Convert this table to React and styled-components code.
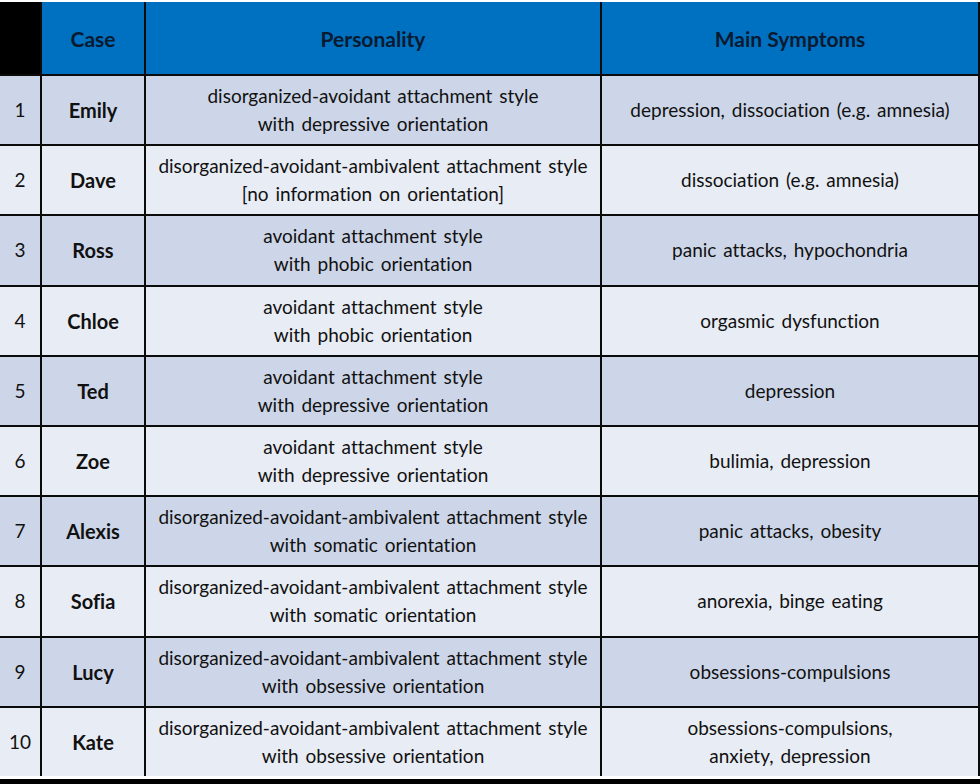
import React from "react";
import styled, { createGlobalStyle } from "styled-components";

const GlobalStyle = createGlobalStyle`
  html, body {
    margin: 0;
    padding: 0;
    background: #ffffff;
  }
  body {
    font-family: Lato, "Open Sans", "Liberation Sans", sans-serif;
    font-variant-ligatures: none;
  }
`;

const Page = styled.div`
  width: 980px;
  height: 784px;
  background: #ffffff;
  padding-top: 2px;
  box-sizing: border-box;
  display: flex;
  flex-direction: column;
`;

const Table = styled.div`
  display: grid;
  grid-template-columns: 40px 102px 454px 376px;
  grid-template-rows: 72px repeat(10, 68.2px);
  gap: 2px;
  width: 978px;
  padding-right: 2px;
  box-sizing: content-box;
  background: #0b0b0b;
`;

const HeadCell = styled.div`
  background: ${(p) => (p.$blank ? "#000000" : "#0070c0")};
  color: #0a1a30;
  font-weight: 700;
  font-size: 21px;
  display: flex;
  align-items: center;
  justify-content: center;
`;

const Cell = styled.div`
  background: ${(p) => (p.$odd ? "#cdd6e8" : "#e8ecf4")};
  color: #111111;
  font-size: ${(p) => (p.$bold ? "20px" : "19px")};
  font-weight: ${(p) => (p.$bold ? 700 : 400)};
  line-height: 28px;
  word-spacing: 2px;
  display: flex;
  flex-direction: column;
  align-items: center;
  justify-content: center;
  text-align: center;
  white-space: nowrap;
`;

const Spacer = styled.div`
  height: 3px;
`;

const BottomBar = styled.div`
  flex: 1;
  background: #000000;
`;

const rows = [
  ["Emily", ["disorganized-avoidant attachment style", "with depressive orientation"], ["depression, dissociation (e.g. amnesia)"]],
  ["Dave", ["disorganized-avoidant-ambivalent attachment style", "[no information on orientation]"], ["dissociation (e.g. amnesia)"]],
  ["Ross", ["avoidant attachment style", "with phobic orientation"], ["panic attacks, hypochondria"]],
  ["Chloe", ["avoidant attachment style", "with phobic orientation"], ["orgasmic dysfunction"]],
  ["Ted", ["avoidant attachment style", "with depressive orientation"], ["depression"]],
  ["Zoe", ["avoidant attachment style", "with depressive orientation"], ["bulimia, depression"]],
  ["Alexis", ["disorganized-avoidant-ambivalent attachment style", "with somatic orientation"], ["panic attacks, obesity"]],
  ["Sofia", ["disorganized-avoidant-ambivalent attachment style", "with somatic orientation"], ["anorexia, binge eating"]],
  ["Lucy", ["disorganized-avoidant-ambivalent attachment style", "with obsessive orientation"], ["obsessions-compulsions"]],
  ["Kate", ["disorganized-avoidant-ambivalent attachment style", "with obsessive orientation"], ["obsessions-compulsions,", "anxiety, depression"]],
];

function Lines({ items }) {
  return items.map((line) => <span key={line}>{line}</span>);
}

export default function App() {
  return (
    <Page>
      <GlobalStyle />
      <Table>
        <HeadCell $blank />
        <HeadCell>Case</HeadCell>
        <HeadCell>Personality</HeadCell>
        <HeadCell>Main Symptoms</HeadCell>
        {rows.map(([name, personality, symptoms], i) => {
          const odd = i % 2 === 0;
          return (
            <React.Fragment key={name}>
              <Cell $odd={odd}>{i + 1}</Cell>
              <Cell $odd={odd} $bold>{name}</Cell>
              <Cell $odd={odd}><Lines items={personality} /></Cell>
              <Cell $odd={odd}><Lines items={symptoms} /></Cell>
            </React.Fragment>
          );
        })}
      </Table>
      <Spacer />
      <BottomBar />
    </Page>
  );
}
